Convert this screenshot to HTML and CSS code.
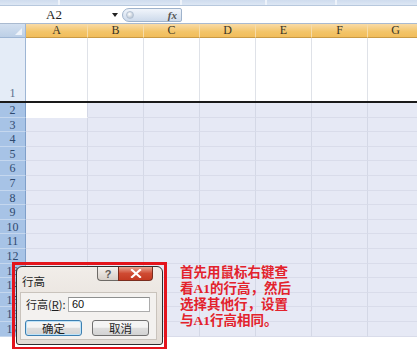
FILE: index.html
```html
<!DOCTYPE html>
<html>
<head>
<meta charset="utf-8">
<link rel="stylesheet" href="styles.css">
</head>
<body>
<div class="app">
  <div class="ribbon">
    <span class="rg" style="width:60px"></span>
    <span class="rg" style="width:122px"></span>
    <span class="rg" style="width:85px"></span>
    <span class="rg" style="width:70px"></span>
  </div>
  <div class="fbar">
    <div class="namebox"><span class="ref">A2</span><span class="arrow"></span></div>
    <div class="fxpill"><span class="bubble"></span><span class="fx">fx</span></div>
    <div class="formula"></div>
  </div>
  <div class="sheet">
    <div class="colhead">
      <div class="corner"><span class="tri"></span></div>
      <div class="ch wa">A</div><div class="ch">B</div><div class="ch">C</div><div class="ch">D</div><div class="ch">E</div><div class="ch">F</div><div class="ch">G</div>
    </div>
    <div class="row r1"><div class="rh">1</div><div class="c wa"></div><div class="c"></div><div class="c"></div><div class="c"></div><div class="c"></div><div class="c"></div><div class="c"></div></div>
    <div class="row sel"><div class="rh">2</div><div class="c wa active"></div><div class="c"></div><div class="c"></div><div class="c"></div><div class="c"></div><div class="c"></div><div class="c"></div></div>
    <div class="row sel"><div class="rh">3</div><div class="c wa"></div><div class="c"></div><div class="c"></div><div class="c"></div><div class="c"></div><div class="c"></div><div class="c"></div></div>
    <div class="row sel"><div class="rh">4</div><div class="c wa"></div><div class="c"></div><div class="c"></div><div class="c"></div><div class="c"></div><div class="c"></div><div class="c"></div></div>
    <div class="row sel"><div class="rh">5</div><div class="c wa"></div><div class="c"></div><div class="c"></div><div class="c"></div><div class="c"></div><div class="c"></div><div class="c"></div></div>
    <div class="row sel"><div class="rh">6</div><div class="c wa"></div><div class="c"></div><div class="c"></div><div class="c"></div><div class="c"></div><div class="c"></div><div class="c"></div></div>
    <div class="row sel"><div class="rh">7</div><div class="c wa"></div><div class="c"></div><div class="c"></div><div class="c"></div><div class="c"></div><div class="c"></div><div class="c"></div></div>
    <div class="row sel"><div class="rh">8</div><div class="c wa"></div><div class="c"></div><div class="c"></div><div class="c"></div><div class="c"></div><div class="c"></div><div class="c"></div></div>
    <div class="row sel"><div class="rh">9</div><div class="c wa"></div><div class="c"></div><div class="c"></div><div class="c"></div><div class="c"></div><div class="c"></div><div class="c"></div></div>
    <div class="row sel"><div class="rh">10</div><div class="c wa"></div><div class="c"></div><div class="c"></div><div class="c"></div><div class="c"></div><div class="c"></div><div class="c"></div></div>
    <div class="row sel"><div class="rh">11</div><div class="c wa"></div><div class="c"></div><div class="c"></div><div class="c"></div><div class="c"></div><div class="c"></div><div class="c"></div></div>
    <div class="row sel"><div class="rh">12</div><div class="c wa"></div><div class="c"></div><div class="c"></div><div class="c"></div><div class="c"></div><div class="c"></div><div class="c"></div></div>
    <div class="row sel"><div class="rh">13</div><div class="c wa"></div><div class="c"></div><div class="c"></div><div class="c"></div><div class="c"></div><div class="c"></div><div class="c"></div></div>
    <div class="row sel"><div class="rh">14</div><div class="c wa"></div><div class="c"></div><div class="c"></div><div class="c"></div><div class="c"></div><div class="c"></div><div class="c"></div></div>
    <div class="row sel"><div class="rh">15</div><div class="c wa"></div><div class="c"></div><div class="c"></div><div class="c"></div><div class="c"></div><div class="c"></div><div class="c"></div></div>
    <div class="row sel"><div class="rh">16</div><div class="c wa"></div><div class="c"></div><div class="c"></div><div class="c"></div><div class="c"></div><div class="c"></div><div class="c"></div></div>
    <div class="row sel"><div class="rh">17</div><div class="c wa"></div><div class="c"></div><div class="c"></div><div class="c"></div><div class="c"></div><div class="c"></div><div class="c"></div></div>
  </div>

  <div class="callout">
    <div class="dialog">
      <div class="titlebar">
        <span class="title">行高</span>
        <div class="capbtns">
          <span class="cb help">?</span>
          <span class="cb close">
            <svg width="12" height="9" viewBox="0 0 12 9"><path d="M2 1 L10 8 M10 1 L2 8" stroke="#fff" stroke-width="2.2" stroke-linecap="square"/></svg>
          </span>
        </div>
      </div>
      <div class="client">
        <div class="field">
          <span class="lbl">行高(<u>R</u>):</span>
          <span class="input">60</span>
        </div>
        <div class="btns">
          <span class="btn ok">确定</span>
          <span class="btn">取消</span>
        </div>
      </div>
    </div>
  </div>

  <div class="note">
    <div class="ln">首先用鼠标右键查</div>
    <div class="ln">看A1的行高，然后</div>
    <div class="ln">选择其他行，设置</div>
    <div class="ln">与A1行高相同。</div>
  </div>
</div>
</body>
</html>
```

FILE: styles.css
```css
* { box-sizing: border-box; }
html, body { margin: 0; padding: 0; }
body {
  width: 417px;
  height: 349px;
  overflow: hidden;
  background: #fff;
  font-family: "Liberation Serif", serif;
}
.app {
  position: relative;
  width: 417px;
  height: 349px;
  overflow: hidden;
  display: flex;
  flex-direction: column;
}
.ribbon {
  height: 6px;
  flex: none;
  display: flex;
  background: linear-gradient(#cfdcee, #dde7f4);
  border-bottom: 1px solid #b7c8dd;
}
.rg {
  flex: none;
  height: 100%;
  border-right: 2px solid #eef3fa;
}
.fbar {
  height: 18px;
  flex: none;
  display: flex;
  align-items: center;
  background: #fff;
  border-bottom: 1px solid #a9bad0;
}
.namebox {
  width: 122px;
  height: 100%;
  display: flex;
  align-items: center;
  flex: none;
}
.ref {
  width: 108px;
  text-align: center;
  font-size: 13px;
  color: #222;
  font-family: "Liberation Serif", serif;
}
.arrow {
  margin-left: 4px;
  width: 0;
  height: 0;
  border-left: 3px solid transparent;
  border-right: 3px solid transparent;
  border-top: 4px solid #222;
}
.fxpill {
  flex: none;
  width: 60px;
  height: 14px;
  border: 1px solid #9fb3cc;
  border-radius: 7px 2px 2px 7px;
  background: linear-gradient(#f1f5fb, #cddaeb);
  display: flex;
  align-items: center;
  justify-content: space-between;
  padding: 0 4px 0 3px;
}
.bubble {
  width: 8px;
  height: 8px;
  border-radius: 50%;
  background: radial-gradient(circle at 40% 35%, #fff, #a4b3c6);
  border: 1px solid #b4c2d3;
}
.fx {
  font-style: italic;
  font-weight: bold;
  font-size: 11px;
  color: #555;
  font-family: "Liberation Serif", serif;
}
.formula { flex: 1; height: 100%; }

.sheet {
  flex: 1;
  display: flex;
  flex-direction: column;
  background: #fff;
}
.colhead {
  display: flex;
  height: 14px;
  flex: none;
}
.corner {
  width: 26px;
  flex: none;
  position: relative;
  background: linear-gradient(#d3e0f0, #bccfe6);
  border-right: 1px solid #9eb6d4;
  border-bottom: 1px solid #9eb6d4;
}
.tri {
  position: absolute;
  right: 3px;
  bottom: 2px;
  width: 0;
  height: 0;
  border-left: 7px solid transparent;
  border-bottom: 7px solid #eef3fa;
}
.ch {
  width: 56px;
  flex: none;
  text-align: center;
  font-size: 12px;
  line-height: 13px;
  color: #3a3424;
  background: linear-gradient(#f9dba6, #f3c468 60%, #f1bd5b);
  border-right: 1px solid #f6dcaa;
  border-bottom: 1px solid #c99a44;
}
.wa { width: 62px !important; }

.row {
  display: flex;
  flex: none;
  height: 14.6px;
}
.row.r1 {
  height: 65px;
  border-bottom: 2px solid #1a1a1a;
}
.rh {
  width: 26px;
  flex: none;
  text-align: center;
  font-size: 12px;
  color: #2f4a70;
  background: #a7c3e6;
  border-right: 1px solid #7f9fc9;
  border-bottom: 1px solid #c5d7ee;
  line-height: 13px;
  padding-top: 1px;
}
.r1 .rh {
  background: #e4ecf7;
  color: #5a6f8c;
  border-bottom: none;
  display: flex;
  align-items: flex-end;
  justify-content: center;
  padding-bottom: 1px;
  border-right: 1px solid #9eb6d4;
}
.c {
  width: 56px;
  flex: none;
  border-right: 1px solid #dfe2e8;
}
.sel .c {
  background: #e6e9f5;
  border-right: 1px solid #d4d8e6;
  border-bottom: 1px solid #d9dcea;
}
.sel .c.active {
  background: #fff;
  border-bottom-color: #fff;
}

/* callout with dialog */
.callout {
  position: absolute;
  left: 12px;
  top: 262px;
  width: 155px;
  height: 88px;
  border: 3px solid #e3141c;
  padding: 1px 1px 0 1px;
}
.dialog {
  width: 147px;
  height: 79px;
  border: 1px solid #2e2e2e;
  border-radius: 6px 6px 3px 3px;
  background: linear-gradient(#f1ede9, #e2dbd4);
  display: flex;
  flex-direction: column;
  padding: 0 5px 4px 3px;
  font-family: "Noto Sans CJK SC", sans-serif;
}
.titlebar {
  height: 25px;
  flex: none;
  display: flex;
  justify-content: space-between;
  align-items: flex-start;
}
.title {
  font-size: 11.5px;
  color: #1e1e1e;
  margin-top: 7px;
  margin-left: 2px;
  line-height: 14px;
}
.capbtns {
  display: flex;
  margin-right: 4px;
}
.cb {
  height: 14px;
  display: flex;
  align-items: center;
  justify-content: center;
  border: 1px solid #6d6a66;
  border-top: none;
}
.help {
  width: 21px;
  border-radius: 0 0 0 4px;
  background: linear-gradient(#f4f1ee, #d6cfc8);
  font-family: "Liberation Sans", sans-serif;
  font-size: 11px;
  font-weight: bold;
  color: #5c5a57;
  border-right: none;
}
.close {
  width: 35px;
  border-radius: 0 0 4px 0;
  background: linear-gradient(#e9a592, #cf4a32 50%, #c43a22);
  border-color: #7a2c1e;
}
.client {
  flex: 1;
  background: #f3f1ef;
  border: 1px solid #c9c3bc;
  display: flex;
  flex-direction: column;
  padding: 3px 5px 0 5px;
}
.field {
  display: flex;
  align-items: center;
  height: 16px;
}
.lbl {
  font-size: 11px;
  color: #1e1e1e;
  width: 42px;
  flex: none;
  white-space: nowrap;
  line-height: 14px;
}
.lbl u { text-decoration-thickness: 1px; }
.input {
  width: 82px;
  height: 15px;
  flex: none;
  border: 1px solid #acacac;
  border-top-color: #8e8f8f;
  background: #fff;
  font-family: "Liberation Sans", sans-serif;
  font-size: 11px;
  line-height: 13px;
  padding-left: 3px;
  color: #111;
}
.btns {
  display: flex;
  margin-top: 8px;
  margin-left: -1px;
}
.btn {
  width: 57px;
  height: 16px;
  flex: none;
  border: 1px solid #707070;
  border-radius: 3px;
  background: linear-gradient(#f4f4f4 45%, #dedede 50%, #d3d3d3);
  font-size: 11.5px;
  line-height: 14px;
  text-align: center;
  color: #1e1e1e;
  margin-right: 10px;
}
.btn.ok {
  border-color: #3c7fb1;
  box-shadow: inset 0 0 0 1px #bfe3f8;
}

.note {
  position: absolute;
  left: 180px;
  top: 265px;
  font-family: "Liberation Serif", "Noto Sans CJK SC", sans-serif;
  font-weight: bold;
  font-size: 13.5px;
  color: #e3222c;
  white-space: nowrap;
}
.ln {
  height: 16px;
  line-height: 16px;
}
```
